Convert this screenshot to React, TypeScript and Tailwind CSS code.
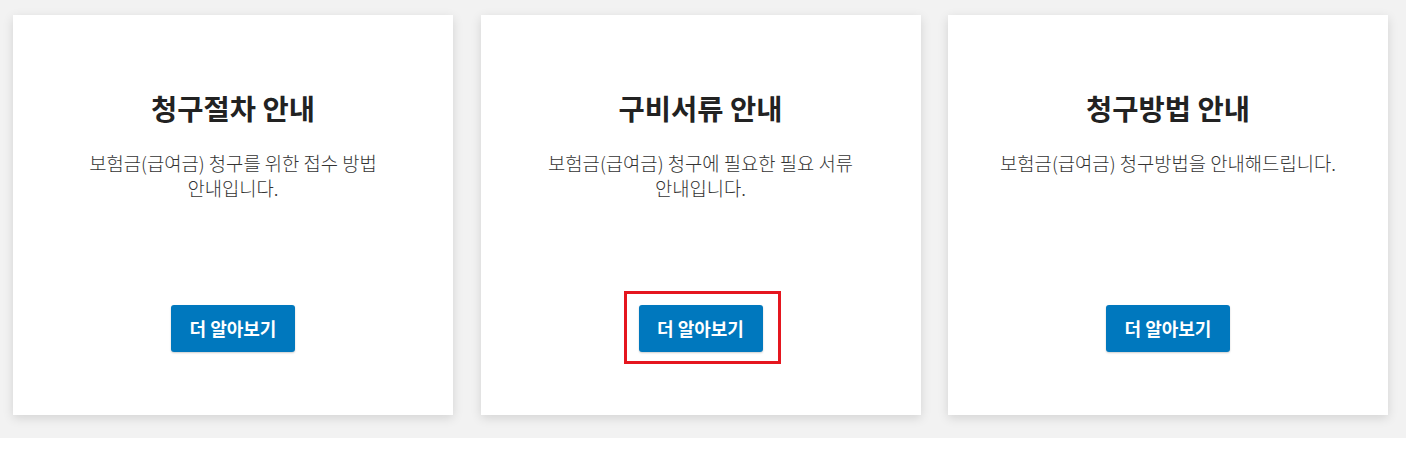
import React from "react";

const cards = [
  { title: "청구절차 안내", desc: "보험금(급여금) 청구를 위한 접수 방법 안내입니다.", highlight: false },
  { title: "구비서류 안내", desc: "보험금(급여금) 청구에 필요한 필요 서류 안내입니다.", highlight: true },
  { title: "청구방법 안내", desc: "보험금(급여금) 청구방법을 안내해드립니다.", highlight: false },
];

export default function App() {
  return (
    <div className="w-[1406px] h-[460px] bg-white" style={{ fontFamily: '"Noto Sans CJK KR", "Noto Sans", sans-serif' }}>
      <div className="bg-[#f2f2f2] h-[438px] pt-[15px] pl-[13px] flex gap-[27.5px]">
        {cards.map((c) => (
          <div
            key={c.title}
            className="w-[440px] h-[400px] bg-white shadow-[0_3px_10px_rgba(0,0,0,0.13)] flex flex-col items-center px-[40px] pt-[75px] pb-[63px]"
          >
            <h2 className="text-[28.5px] leading-[36px] font-bold text-[#222] whitespace-nowrap">{c.title}</h2>
            <p className="mt-[24px] text-[18.8px] leading-[25px] text-[#333] text-center font-light break-keep">{c.desc}</p>
            <div className="mt-auto relative">
              {c.highlight && (
                <div className="absolute left-[-15px] right-[-18px] top-[-14px] bottom-[-12px] border-[3px] border-[#e5161f]" />
              )}
              <button className="relative w-[124px] h-[47px] bg-[#0078be] rounded-[3px] shadow-[0_1px_2px_rgba(0,0,0,0.2)] text-white text-[18px] font-bold whitespace-nowrap">
                더 알아보기
              </button>
            </div>
          </div>
        ))}
      </div>
    </div>
  );
}
